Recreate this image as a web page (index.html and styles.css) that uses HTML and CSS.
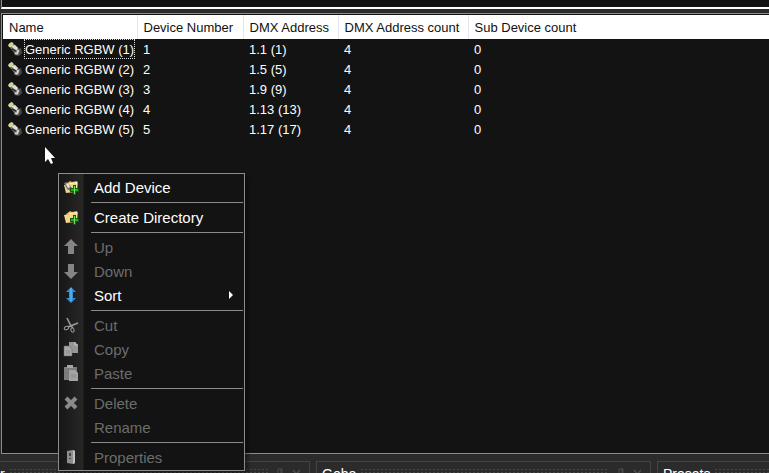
FILE: index.html
```html
<!DOCTYPE html>
<html lang="en">
<head>
  <meta charset="UTF-8" />
  <meta name="viewport" content="width=device-width, initial-scale=1.0"/>
  <title>Devices</title>
  <link rel="stylesheet" href="styles.css">
</head>
<body>
  <svg class="symbols" aria-hidden="true">
    <symbol id="lamp" viewBox="0 0 16 16">
      <path d="M9 9l5-2 1 5-3 3-5-1z" fill="#4a4a4a"/>
      <path d="M1 4l4-3 8 8-2 5-3-1z" fill="#73736e"/>
      <path d="M4 5l4-1 3 3-2 3z" fill="#deded8"/>
      <path d="M5 8l4 2" stroke="#2c2c2c" stroke-width="1.5"/>
      <ellipse cx="3.8" cy="3.8" rx="2.8" ry="2" transform="rotate(-40 3.8 3.8)" fill="#d8d594"/>
      <path d="M8 12q3 2 3-3" fill="none" stroke="#d4d4d4" stroke-width="2"/>
    </symbol>
    <symbol id="folder" viewBox="0 0 16 16">
      <path d="M3 5l4-3 2 1 5-1 1 2-1 8-9 1z" fill="#d9ae58"/>
      <path d="M6 4l8-1v7l-8 1z" fill="#fff0c4"/>
      <path d="M1 6l8-1 2-1 3 1-2 8-9 1z" fill="#f4d48c"/>
    </symbol>
    <symbol id="plus" viewBox="0 0 16 16">
      <path d="M10 6h3v3h3v4h-3v3h-3v-3H7V9h3z" fill="#0c5a12"/>
      <path d="M11.5 7v8M8 11h7" stroke="#67e84f" stroke-width="1.2"/>
    </symbol>
    <symbol id="pin" viewBox="0 0 16 16">
      <path d="M6 3h4v7H6zM4 10.5h8M8 11v4M9 3v7" fill="none" stroke="#4c4c4c"/>
    </symbol>
    <symbol id="close" viewBox="0 0 16 16">
      <path d="M4 4l7 8M11 4l-7 8" stroke="#4c4c4c" stroke-width="1.5"/>
    </symbol>
  </svg>

  <div class="upper-panel"></div>

  <main class="device-list">
    <table class="devices">
      <thead>
        <tr>
          <th class="col-name">Name</th>
          <th class="col-number">Device Number</th>
          <th class="col-address">DMX Address</th>
          <th class="col-count">DMX Address count</th>
          <th>Sub Device count</th>
        </tr>
      </thead>
      <tbody>
        <tr><td><span class="device"><svg><use href="#lamp"/></svg><span class="label focused">Generic RGBW (1)</span></span></td><td>1</td><td>1.1 (1)</td><td>4</td><td>0</td></tr>
        <tr><td><span class="device"><svg><use href="#lamp"/></svg><span class="label">Generic RGBW (2)</span></span></td><td>2</td><td>1.5 (5)</td><td>4</td><td>0</td></tr>
        <tr><td><span class="device"><svg><use href="#lamp"/></svg><span class="label">Generic RGBW (3)</span></span></td><td>3</td><td>1.9 (9)</td><td>4</td><td>0</td></tr>
        <tr><td><span class="device"><svg><use href="#lamp"/></svg><span class="label">Generic RGBW (4)</span></span></td><td>4</td><td>1.13 (13)</td><td>4</td><td>0</td></tr>
        <tr><td><span class="device"><svg><use href="#lamp"/></svg><span class="label">Generic RGBW (5)</span></span></td><td>5</td><td>1.17 (17)</td><td>4</td><td>0</td></tr>
      </tbody>
    </table>
  </main>

  <div class="docks">
    <section class="dock dock-first">
      <h2>r</h2><span class="grip"></span>
      <svg><use href="#pin"/></svg><svg><use href="#close"/></svg>
    </section>
    <section class="dock dock-gobo">
      <h2>Gobo</h2><span class="grip"></span>
      <svg><use href="#pin"/></svg><svg><use href="#close"/></svg>
    </section>
    <section class="dock dock-presets">
      <h2>Presets</h2><span class="grip"></span>
    </section>
  </div>

  <div class="menu" role="menu">
    <button class="item" role="menuitem">
      <svg viewBox="0 0 16 16"><use href="#folder"/><path d="M1 4l3-1 5 6-2 3-3-2z" fill="#77736a"/><path d="M3 5l2-1 2 4-2 1z" fill="#eee"/><use href="#plus"/></svg>
      Add Device
    </button>
    <hr>
    <button class="item" role="menuitem">
      <svg viewBox="0 0 16 16"><use href="#folder"/><use href="#plus"/></svg>
      Create Directory
    </button>
    <hr>
    <button class="item" role="menuitem" disabled>
      <svg viewBox="0 0 16 16"><path d="M8 0l7 7h-4v8H5V7H1z" fill="#858585"/></svg>
      Up
    </button>
    <button class="item" role="menuitem" disabled>
      <svg viewBox="0 0 16 16"><path d="M8 16l7-7h-4V1H5v8H1z" fill="#858585"/></svg>
      Down
    </button>
    <button class="item" role="menuitem">
      <svg viewBox="0 0 16 16"><path d="M8 0l5 5h-3v6h3l-5 5-5-5h3V5H3z" fill="#2f8fd8"/><path d="M8 1v13" stroke="#7cc4f2"/></svg>
      Sort
      <svg class="arrow" viewBox="0 0 5 8"><path d="M0 0l4 4-4 4z" fill="#fff"/></svg>
    </button>
    <hr>
    <button class="item" role="menuitem" disabled>
      <svg viewBox="0 0 16 16" fill="none" stroke="#999"><path d="M4 1l4 8 2 2M15 6L5 10" stroke-width="1.6"/><ellipse cx="3.5" cy="11" rx="2.3" ry="1.6" transform="rotate(-25 3.5 11)"/><ellipse cx="9.5" cy="13" rx="1.5" ry="2.2" transform="rotate(-20 9.5 13)"/></svg>
      Cut
    </button>
    <button class="item" role="menuitem" disabled>
      <svg viewBox="0 0 16 16"><path d="M6 1h6l3 3v8H6z" fill="#969696"/><path d="M12 1v3h3" fill="none" stroke="#ccc"/><path d="M1 5h5l3 3v7H1z" fill="#a8a8a8" stroke="#666" stroke-width=".5"/><path d="M3 10h4M3 12h4" stroke="#888"/></svg>
      Copy
    </button>
    <button class="item" role="menuitem" disabled>
      <svg viewBox="0 0 16 16"><path d="M1 2h13v13H1z" fill="#7d7d7d"/><path d="M4 0h6v3H4z" fill="#a5a5a5"/><path d="M6 5h6l3 3v8H6z" fill="#a3a3a3"/><path d="M8 10h5M8 12h5" stroke="#888"/></svg>
      Paste
    </button>
    <hr>
    <button class="item" role="menuitem" disabled>
      <svg viewBox="0 0 16 16"><path d="M3 3l10 10M13 3L3 13" stroke="#8a8a8a" stroke-width="4"/></svg>
      Delete
    </button>
    <button class="item" role="menuitem" disabled>
      <svg viewBox="0 0 16 16"></svg>
      Rename
    </button>
    <hr>
    <button class="item" role="menuitem" disabled>
      <svg viewBox="0 0 16 16"><path d="M4 2l6-1 2 1v12l-2 1-6-1z" fill="#8d8d8d"/><path d="M10 1l2 1v12l-2 1z" fill="#c0c0c0"/><path d="M6 4h2v3H6zM6 9h2v1H6z" fill="#444"/></svg>
      Properties
    </button>
  </div>

  <svg class="cursor" viewBox="0 0 12 19"><path d="M1 1v15l3-3 3 5 2-1-2-5h4z" fill="#fff"/></svg>
</body>
</html>
```

FILE: styles.css
```css
* {
  box-sizing: border-box;
}

body {
  margin: 0;
  height: 100vh;
  overflow: hidden;
  background-color: #2b2b2b;
  color: #fff;
  font-family: "Liberation Sans", Arial, sans-serif;
  font-size: 13px;
  display: flex;
  flex-direction: column;
}

.symbols {
  display: none;
}

.upper-panel {
  flex: none;
  height: 9px;
  margin-left: 1px;
  background-color: #131313;
  border-left: 1px solid #8c8c8c;
  border-bottom: 2px solid #fff;
}

.device-list {
  flex: 1;
  min-height: 0;
  margin: 4px 0 0 1px;
  background-color: #131313;
  border: 1px solid #8c8c8c;
  border-right: none;
  padding: 1px 0 0 1px;
}

.devices {
  width: 100%;
  table-layout: fixed;
  border-collapse: collapse;
}

.devices th {
  height: 24px;
  padding: 0 0 0 6px;
  background-color: #fff;
  color: #111;
  font-weight: normal;
  text-align: left;
  white-space: nowrap;
  border-right: 1px solid #e4e4f0;
}

.devices th:last-child {
  border-right: none;
}

.col-name { width: 134px; }
.col-number { width: 106px; }
.col-address { width: 95px; }
.col-count { width: 130px; }

.devices td {
  height: 20px;
  padding: 0 0 0 6px;
  white-space: nowrap;
}

.devices td:first-child {
  padding-left: 4px;
}

.device {
  display: flex;
  align-items: center;
  gap: 1px;
}

.device svg {
  flex: none;
  width: 16px;
  height: 16px;
}

.label {
  padding-top: 1px;
  line-height: 17px;
  border: 1px solid transparent;
}

.label.focused {
  border: 1px dotted #ddd;
}

.docks {
  flex: none;
  display: flex;
  gap: 6px;
  height: 19px;
  padding-top: 7px;
}

.dock {
  display: flex;
  gap: 4px;
  padding: 4px 7px 0 5px;
  border: 1px solid #444;
  border-bottom: none;
  overflow: hidden;
}

.dock-first {
  width: 310px;
  padding-left: 0;
  border-left: none;
}

.dock-gobo {
  width: 335px;
}

.dock-presets {
  flex: 1;
  padding-right: 0;
  border-right: none;
}

.dock h2 {
  margin: 0;
  font-size: 14px;
  line-height: 16px;
  font-weight: normal;
}

.dock svg {
  flex: none;
  width: 16px;
  height: 16px;
  margin-right: -3px;
}

.grip {
  flex: 1;
  height: 6px;
  margin-top: 2px;
  background-image: radial-gradient(#464646 1px, transparent 1px);
  background-size: 4px 3px;
}

/* context menu */
.menu {
  position: absolute;
  left: 58px;
  top: 173px;
  width: 187px;
  padding: 1px;
  border: 1px solid #8c8c8c;
  background: linear-gradient(to right, #161616, #272727 24px, #131313 25px);
  box-shadow: 3px 3px 4px rgba(0, 0, 0, 0.4);
}

.item {
  display: flex;
  align-items: center;
  gap: 15px;
  width: 100%;
  height: 24px;
  padding: 0 9px 0 3px;
  border: none;
  background: none;
  color: #fff;
  font-family: inherit;
  font-size: 15px;
  text-align: left;
}

.item:disabled {
  color: #6c6c6c;
}

.item svg {
  flex: none;
  width: 16px;
  height: 16px;
}

.item .arrow {
  width: 5px;
  height: 8px;
  margin-left: auto;
}

.menu hr {
  height: 1px;
  margin: 3px 0 2px 31px;
  border: none;
  background-color: #8c8c8c;
}

.cursor {
  position: absolute;
  left: 44px;
  top: 146px;
  width: 12px;
  height: 19px;
}
```
